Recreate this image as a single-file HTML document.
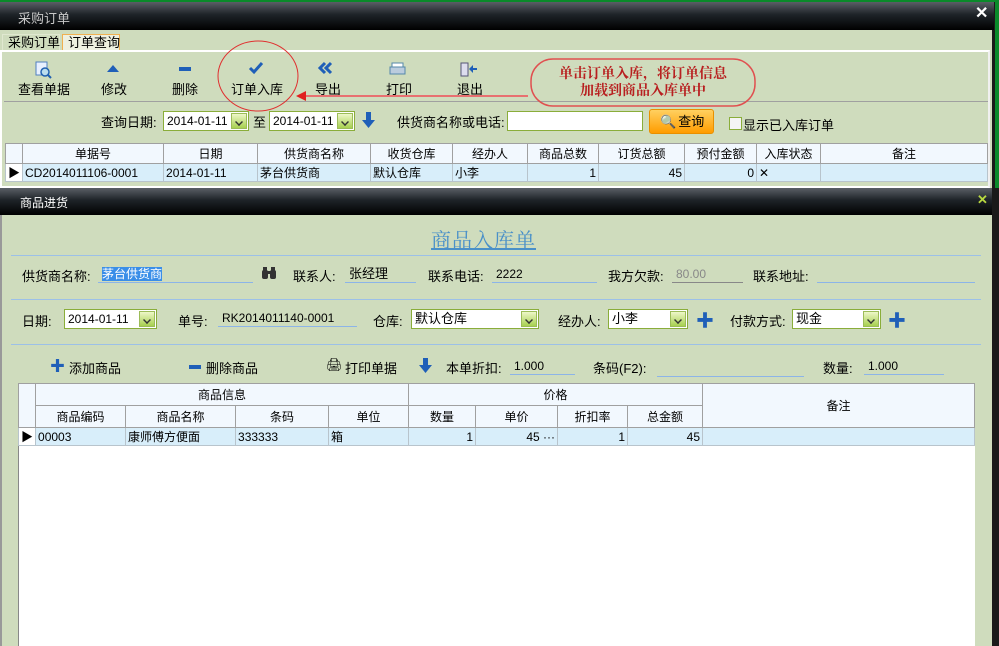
<!DOCTYPE html>
<html><head><meta charset="utf-8"><style>
*{margin:0;padding:0;box-sizing:border-box}
body{width:999px;height:646px;overflow:hidden;background:#1a1a1a;font-family:"Liberation Sans","Noto Sans CJK SC",sans-serif;font-size:12px;color:#000;position:relative}
.a{position:absolute;white-space:nowrap}
.title{background:linear-gradient(#5a5f66,#1e2328 45%,#000);}
.g{background:#cfdcbd}
.combo{position:absolute;background:#fff;border:1px solid #8aad3a;height:20px;font-size:12px;line-height:18px;padding-left:3px}
.combo .b{position:absolute;right:1px;top:1px;width:16px;height:16px;background:linear-gradient(#eef7c8,#a8d050);border:1px solid #9cbc58}
.combo .b:after{content:"";position:absolute;left:3px;top:4px;width:6px;height:6px;border-right:2px solid #333;border-bottom:2px solid #333;transform:rotate(45deg) scale(.7)}
table{border-collapse:collapse;position:absolute;font-size:12px}
td{border:1px solid #a0a0a0;text-align:center;height:20px;padding:0 2px}
.hd td{background:#f2f8fe}
.row td{background:#d8eefa;height:16px;text-align:left;border-color:#b8c4cc}
.r{text-align:right!important}
.uline{position:absolute;border-bottom:1px solid #8cb4e8;height:18px;line-height:18px;font-size:12px;padding-left:4px}
.hl{position:absolute;height:1px;background:#9cc0e8}
</style></head><body>
<!-- top window -->
<div class="a" style="left:0;top:0;width:999px;height:2px;background:#0a8a2a"></div>
<div class="a title" style="left:0;top:2px;width:994px;height:28px"></div>
<div class="a" style="left:18px;top:8px;color:#c8c8c8;font-size:13px">采购订单</div>
<div class="a" style="left:975px;top:3px;color:#fff;font-size:16px;font-weight:bold">✕</div>
<div class="a" style="left:995px;top:2px;width:4px;height:186px;background:#0a8a2a"></div>
<div class="a g" style="left:0;top:30px;width:992px;height:158px"></div>
<div class="a" style="left:2px;top:34px;width:58px;height:17px;border:1px solid #e0e8d0;border-bottom:none;font-size:13px;line-height:15px;padding-left:5px">采购订单</div>
<div class="a" style="left:62px;top:34px;width:58px;height:17px;border:1px solid #f0b050;border-bottom:none;background:#eef0e0;font-size:13px;line-height:15px;padding-left:5px">订单查询</div>
<div class="a" style="left:0;top:50px;width:990px;height:138px;border:2px solid #fff;border-right:2px solid #f0f0f0"></div>
<div class="a" style="left:4px;top:101px;width:984px;height:1px;background:#a0a0a0"></div>
<!-- toolbar -->
<svg class="a" style="left:0;top:60px" width="500" height="22">
<rect x="36" y="2" width="11" height="13" fill="#e8f0ff" stroke="#5080c0"/><circle cx="45" cy="12" r="4" fill="#bde" stroke="#2060b0" stroke-width="1.5"/><line x1="48" y1="15" x2="51" y2="18" stroke="#2060b0" stroke-width="2"/>
<polygon points="107,12 113,5 119,12" fill="#1f5fb8"/>
<rect x="179" y="7" width="12" height="4" fill="#1f5fb8"/>
<polyline points="250,8 254,12 262,3" fill="none" stroke="#1f5fb8" stroke-width="3"/>
<polyline points="325,3 320,8 325,13" fill="none" stroke="#1f5fb8" stroke-width="3"/><polyline points="331,3 326,8 331,13" fill="none" stroke="#1f5fb8" stroke-width="3"/>
<rect x="390" y="7" width="15" height="7" fill="#bcd" stroke="#58a"/><rect x="392" y="3" width="11" height="4" fill="#fff" stroke="#58a"/>
<rect x="461" y="3" width="7" height="13" fill="#dde" stroke="#557"/><polygon points="469,9 473,5 473,8 477,8 477,10 473,10 473,13" fill="#1f5fb8"/>
</svg>
<div class="a" style="left:18px;top:79px;font-size:13px">查看单据</div>
<div class="a" style="left:101px;top:79px;font-size:13px">修改</div>
<div class="a" style="left:172px;top:79px;font-size:13px">删除</div>
<div class="a" style="left:231px;top:79px;font-size:13px">订单入库</div>
<div class="a" style="left:315px;top:79px;font-size:13px">导出</div>
<div class="a" style="left:386px;top:79px;font-size:13px">打印</div>
<div class="a" style="left:457px;top:79px;font-size:13px">退出</div>
<svg class="a" style="left:0;top:40px" width="999" height="80">
<ellipse cx="258" cy="36" rx="40" ry="35" fill="none" stroke="#e03030" stroke-width="1"/>
<line x1="304" y1="56" x2="528" y2="56" stroke="#e87070" stroke-width="2"/>
<polygon points="296,56 306,51 306,61" fill="#e02020"/>
<rect x="531" y="19" width="224" height="47" rx="22" fill="none" stroke="#e05050" stroke-width="1.5"/>
</svg>
<div class="a" style="left:531px;top:65px;width:224px;text-align:center;color:#b82020;font-weight:bold;font-family:'Noto Serif CJK SC',serif;font-size:14px;line-height:17px">单击订单入库，将订单信息<br>加载到商品入库单中</div>
<!-- query -->
<div class="a" style="left:101px;top:112px;font-size:13px">查询日期:</div>
<div class="combo" style="left:163px;top:111px;width:86px">2014-01-11<div class="b"></div></div>
<div class="a" style="left:253px;top:112px;font-size:13px">至</div>
<div class="combo" style="left:269px;top:111px;width:86px">2014-01-11<div class="b"></div></div>
<svg class="a" style="left:362px;top:112px" width="14" height="18"><rect x="4" y="0" width="5" height="9" fill="#1f5fb8"/><polygon points="0,8 13,8 6.5,16" fill="#1f5fb8"/></svg>
<div class="a" style="left:397px;top:112px;font-size:13px">供货商名称或电话:</div>
<div class="a" style="left:507px;top:111px;width:136px;height:20px;background:#fff;border:1px solid #8aad3a"></div>
<div class="a" style="left:649px;top:109px;width:65px;height:25px;border-radius:3px;background:linear-gradient(#ffd060,#ff9c00);border:1px solid #e89000;font-size:13px;line-height:23px;padding-left:10px">🔍<span style="margin-left:2px">查询</span></div>
<div class="a" style="left:729px;top:117px;width:13px;height:13px;border:1px solid #8aad3a;background:#f4f4f4"></div>
<div class="a" style="left:743px;top:115px;font-size:13px">显示已入库订单</div>
<table style="left:5px;top:143px;width:983px">
<tr class="hd"><td style="width:12px"></td><td style="width:141px">单据号</td><td style="width:94px">日期</td><td style="width:113px">供货商名称</td><td style="width:82px">收货仓库</td><td style="width:75px">经办人</td><td style="width:71px">商品总数</td><td style="width:86px">订货总额</td><td style="width:72px">预付金额</td><td style="width:64px">入库状态</td><td>备注</td></tr>
<tr class="row"><td style="background:#fff">▶</td><td>CD2014011106-0001</td><td>2014-01-11</td><td>茅台供货商</td><td>默认仓库</td><td>小李</td><td class="r">1</td><td class="r">45</td><td class="r">0</td><td>✕</td><td></td></tr>
</table>
<!-- bottom window -->
<div class="a title" style="left:0;top:188px;width:992px;height:27px"></div>
<div class="a" style="left:20px;top:194px;color:#fff;font-size:12px">商品进货</div>
<div class="a" style="left:977px;top:192px;color:#b8d840;font-size:13px;font-weight:bold">✕</div>
<div class="a g" style="left:2px;top:215px;width:990px;height:431px"></div>
<div class="a" style="left:0;top:215px;width:2px;height:431px;background:#999"></div>
<div class="a" style="left:431px;top:224px;color:#4a90c8;font-size:20px;text-decoration:underline;font-family:'Noto Serif CJK SC',serif;letter-spacing:1px">商品入库单</div>
<div class="hl" style="left:11px;top:255px;width:970px"></div>
<div class="hl" style="left:11px;top:299px;width:970px"></div>
<div class="hl" style="left:11px;top:344px;width:970px"></div>
<div class="a" style="left:22px;top:266px;font-size:13px">供货商名称:</div>
<div class="uline" style="left:98px;top:265px;width:155px"><span style="background:#3a8ee8;color:#fff">茅台供货商</span></div>
<svg class="a" style="left:261px;top:266px" width="16" height="14"><rect x="1" y="4" width="6" height="9" rx="2" fill="#333"/><rect x="9" y="4" width="6" height="9" rx="2" fill="#333"/><rect x="2" y="1" width="4" height="4" fill="#333"/><rect x="10" y="1" width="4" height="4" fill="#333"/><rect x="6" y="5" width="4" height="3" fill="#333"/></svg>
<div class="a" style="left:293px;top:266px;font-size:13px">联系人:</div>
<div class="uline" style="left:345px;top:265px;width:71px;font-size:13px">张经理</div>
<div class="a" style="left:428px;top:266px;font-size:13px">联系电话:</div>
<div class="uline" style="left:492px;top:265px;width:105px">2222</div>
<div class="a" style="left:608px;top:266px;font-size:13px">我方欠款:</div>
<div class="uline" style="left:672px;top:265px;width:71px;color:#888;border-color:#888">80.00</div>
<div class="a" style="left:753px;top:266px;font-size:13px">联系地址:</div>
<div class="uline" style="left:817px;top:265px;width:158px"></div>
<div class="a" style="left:22px;top:311px;font-size:13px">日期:</div>
<div class="combo" style="left:64px;top:309px;width:93px">2014-01-11<div class="b"></div></div>
<div class="a" style="left:178px;top:311px;font-size:13px">单号:</div>
<div class="uline" style="left:218px;top:309px;width:139px">RK2014011140-0001</div>
<div class="a" style="left:373px;top:311px;font-size:13px">仓库:</div>
<div class="combo" style="left:411px;top:309px;width:128px;font-size:13px">默认仓库<div class="b"></div></div>
<div class="a" style="left:558px;top:311px;font-size:13px">经办人:</div>
<div class="combo" style="left:608px;top:309px;width:80px;font-size:13px">小李<div class="b"></div></div>
<div class="a" style="left:696px;top:307px;color:#1f5fb8;font-size:18px;font-weight:bold">✚</div>
<div class="a" style="left:730px;top:311px;font-size:13px">付款方式:</div>
<div class="combo" style="left:792px;top:309px;width:89px;font-size:13px">现金<div class="b"></div></div>
<div class="a" style="left:888px;top:307px;color:#1f5fb8;font-size:18px;font-weight:bold">✚</div>
<div class="a" style="left:50px;top:355px;color:#1f5fb8;font-size:15px;font-weight:bold">✚</div>
<div class="a" style="left:69px;top:358px;font-size:13px">添加商品</div>
<div class="a" style="left:189px;top:365px;width:12px;height:4px;background:#1f5fb8"></div>
<div class="a" style="left:206px;top:358px;font-size:13px">删除商品</div>
<div class="a" style="left:326px;top:357px;font-size:13px">🖨</div>
<div class="a" style="left:345px;top:358px;font-size:13px">打印单据</div>
<svg class="a" style="left:419px;top:358px" width="14" height="16"><rect x="4" y="0" width="5" height="8" fill="#1f5fb8"/><polygon points="0,7 13,7 6.5,15" fill="#1f5fb8"/></svg>
<div class="a" style="left:446px;top:358px;font-size:13px">本单折扣:</div>
<div class="uline" style="left:510px;top:357px;width:65px">1.000</div>
<div class="a" style="left:593px;top:358px;font-size:13px">条码(F2):</div>
<div class="uline" style="left:657px;top:359px;width:147px"></div>
<div class="a" style="left:823px;top:358px;font-size:13px">数量:</div>
<div class="uline" style="left:864px;top:357px;width:80px">1.000</div>
<div class="a" style="left:18px;top:383px;width:957px;height:263px;background:#fff;border-left:1px solid #888"></div>
<table style="left:18px;top:383px;width:957px">
<tr class="hd"><td rowspan="2" style="width:12px"></td><td colspan="4" style="height:22px">商品信息</td><td colspan="4">价格</td><td rowspan="2">备注</td></tr>
<tr class="hd"><td style="width:90px;height:22px">商品编码</td><td style="width:110px">商品名称</td><td style="width:93px">条码</td><td style="width:80px">单位</td><td style="width:67px">数量</td><td style="width:82px">单价</td><td style="width:70px">折扣率</td><td style="width:75px">总金额</td></tr>
<tr class="row"><td style="background:#fff">▶</td><td>00003</td><td>康师傅方便面</td><td>333333</td><td>箱</td><td class="r">1</td><td class="r">45 ···</td><td class="r">1</td><td class="r">45</td><td></td></tr>
</table>
</body></html>
